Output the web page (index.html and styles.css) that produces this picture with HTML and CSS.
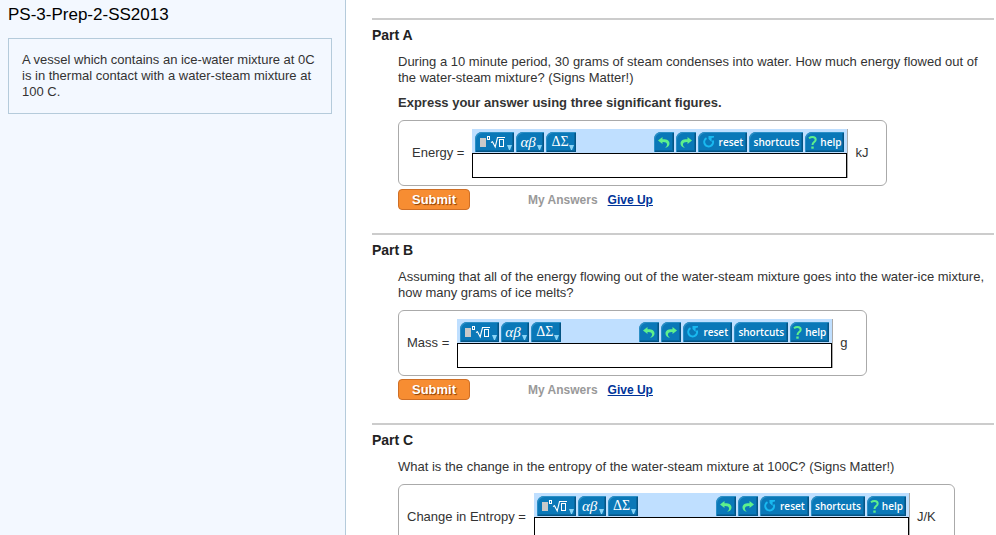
FILE: index.html
```html
<!DOCTYPE html>
<html lang="en">
<head>
<meta charset="utf-8">
<title>PS-3-Prep-2-SS2013</title>
<link rel="stylesheet" href="styles.css">
</head>
<body>
<svg class="sprite" aria-hidden="true">
  <symbol id="i-template" viewBox="0 0 39 20">
    <rect x="5" y="6" width="6" height="9" fill="#c9c9c9"/>
    <rect x="12.500" y="4.500" width="2" height="3" fill="none" stroke="#fff"/>
    <path d="M16 10.500l1.500-.8 2.700 5.300L22.500 5.500h7.500" fill="none" stroke="#fff" stroke-width="1.100"/>
    <rect x="24.500" y="7.500" width="4" height="7" fill="none" stroke="#fff"/>
  </symbol>
  <symbol id="i-caret" viewBox="0 0 5 5"><path d="M0 0h5L3 5H2z" fill="#8ad4f5"/></symbol>
  <symbol id="i-undo" viewBox="0 0 20 20">
    <path d="M4 8.500L8.500 5v2.200C13 7 15.500 8.500 15.500 11.500c0 2-1.500 3.700-4.500 4.500 1.500-1.500 2.200-2.500 2-3.800C12.800 10.500 11.500 9.800 8.500 9.900V12z" fill="#5ef08c"/>
  </symbol>
  <symbol id="i-redo" viewBox="0 0 20 20">
    <path d="M16 8.500L11.500 5v2.200C7 7 4.500 8.500 4.500 11.500c0 2 1.500 3.700 4.500 4.500-1.500-1.500-2.200-2.500-2-3.800C7.200 10.500 8.500 9.800 11.500 9.900V12z" fill="#5ef08c"/>
  </symbol>
  <symbol id="i-reset" viewBox="0 0 12 12">
    <path d="M3.500 2.200A4.400 4.400 0 1 0 9.800 4.500" fill="none" stroke="#19b9f0" stroke-width="2"/>
    <path d="M5.500 0H11v1.600L8.600 2v4L5.500 3z" fill="#19b9f0"/>
  </symbol>
  <symbol id="i-help" viewBox="0 0 9 13">
    <path d="M1 2.200C2 1.400 3 1 4.500 1 6.500 1 7.700 2 7.700 3.700c0 2.300-3.200 2.600-3.200 5.300" fill="none" stroke="#5ef08c" stroke-width="2"/>
    <rect x="3.300" y="10.500" width="2.400" height="2.200" fill="#5ef08c"/>
  </symbol>
</svg>

<div class="layout">
  <aside class="sidebar">
    <h1 class="title">PS-3-Prep-2-SS2013</h1>
    <p class="intro">A vessel which contains an ice-water mixture at 0C is in thermal contact with a water-steam mixture at 100 C.</p>
  </aside>

  <main class="content">
    <section class="part">
      <h2 class="part-title">Part A</h2>
      <div class="part-body">
        <p class="text">During a 10 minute period, 30 grams of steam condenses into water. How much energy flowed out of the water-steam mixture? (Signs Matter!)</p>
        <p class="text strong">Express your answer using three significant figures.</p>
        <div class="answer answer-padded">
          <label class="label" for="energy">Energy =</label>
          <div class="editor">
            <div class="toolbar">
              <button class="tool tool-template" aria-label="Templates"><svg class="template"><use href="#i-template"/></svg><svg class="caret"><use href="#i-caret"/></svg></button>
              <button class="tool tool-greek"><i>αβ</i><svg class="caret"><use href="#i-caret"/></svg></button>
              <button class="tool tool-sigma">ΔΣ<svg class="caret"><use href="#i-caret"/></svg></button>
              <button class="tool tool-arrow push" aria-label="Undo"><svg class="arrow"><use href="#i-undo"/></svg></button>
              <button class="tool tool-arrow" aria-label="Redo"><svg class="arrow"><use href="#i-redo"/></svg></button>
              <button class="tool tool-reset"><svg class="reset"><use href="#i-reset"/></svg>reset</button>
              <button class="tool tool-shortcuts">shortcuts</button>
              <button class="tool tool-help"><svg class="help"><use href="#i-help"/></svg>help</button>
            </div>
            <input class="field" id="energy" type="text">
          </div>
          <span class="unit">kJ</span>
        </div>
        <div class="actions">
          <button class="submit">Submit</button>
          <span class="my-answers">My Answers</span>
          <a class="give-up" href="#">Give Up</a>
        </div>
      </div>
    </section>

    <section class="part">
      <h2 class="part-title">Part B</h2>
      <div class="part-body">
        <p class="text">Assuming that all of the energy flowing out of the water-steam mixture goes into the water-ice mixture, how many grams of ice melts?</p>
        <div class="answer">
          <label class="label" for="mass">Mass =</label>
          <div class="editor">
            <div class="toolbar">
              <button class="tool tool-template" aria-label="Templates"><svg class="template"><use href="#i-template"/></svg><svg class="caret"><use href="#i-caret"/></svg></button>
              <button class="tool tool-greek"><i>αβ</i><svg class="caret"><use href="#i-caret"/></svg></button>
              <button class="tool tool-sigma">ΔΣ<svg class="caret"><use href="#i-caret"/></svg></button>
              <button class="tool tool-arrow push" aria-label="Undo"><svg class="arrow"><use href="#i-undo"/></svg></button>
              <button class="tool tool-arrow" aria-label="Redo"><svg class="arrow"><use href="#i-redo"/></svg></button>
              <button class="tool tool-reset"><svg class="reset"><use href="#i-reset"/></svg>reset</button>
              <button class="tool tool-shortcuts">shortcuts</button>
              <button class="tool tool-help"><svg class="help"><use href="#i-help"/></svg>help</button>
            </div>
            <input class="field" id="mass" type="text">
          </div>
          <span class="unit">g</span>
        </div>
        <div class="actions">
          <button class="submit">Submit</button>
          <span class="my-answers">My Answers</span>
          <a class="give-up" href="#">Give Up</a>
        </div>
      </div>
    </section>

    <section class="part">
      <h2 class="part-title">Part C</h2>
      <div class="part-body">
        <p class="text">What is the change in the entropy of the water-steam mixture at 100C? (Signs Matter!)</p>
        <div class="answer">
          <label class="label" for="entropy">Change in Entropy =</label>
          <div class="editor">
            <div class="toolbar">
              <button class="tool tool-template" aria-label="Templates"><svg class="template"><use href="#i-template"/></svg><svg class="caret"><use href="#i-caret"/></svg></button>
              <button class="tool tool-greek"><i>αβ</i><svg class="caret"><use href="#i-caret"/></svg></button>
              <button class="tool tool-sigma">ΔΣ<svg class="caret"><use href="#i-caret"/></svg></button>
              <button class="tool tool-arrow push" aria-label="Undo"><svg class="arrow"><use href="#i-undo"/></svg></button>
              <button class="tool tool-arrow" aria-label="Redo"><svg class="arrow"><use href="#i-redo"/></svg></button>
              <button class="tool tool-reset"><svg class="reset"><use href="#i-reset"/></svg>reset</button>
              <button class="tool tool-shortcuts">shortcuts</button>
              <button class="tool tool-help"><svg class="help"><use href="#i-help"/></svg>help</button>
            </div>
            <input class="field" id="entropy" type="text">
          </div>
          <span class="unit">J/K</span>
        </div>
      </div>
    </section>
  </main>
</div>
</body>
</html>
```
FILE: styles.css
```css
* {
  box-sizing: border-box;
}

body {
  margin: 0;
  background: #fff;
  color: #333;
  font: 13px/16px "Liberation Sans", Arial, sans-serif;
}

.sprite {
  display: none;
}

.layout {
  display: flex;
  height: 100vh;
}

.sidebar {
  flex: 0 0 346px;
  padding: 5px 13px 0 8px;
  border-right: 1px solid #b5cbdb;
  background: #f3f8ff;
}

.title {
  margin: 0 0 13px;
  color: #000;
  font-size: 17px;
  font-weight: normal;
  line-height: 20px;
}

.intro {
  margin: 0;
  padding: 13px;
  border: 1px solid #b5cbdb;
}

.content {
  flex: 1;
  min-width: 0;
  padding: 18px 2px 0 26px;
  overflow-y: auto;
  scrollbar-width: none;
}

.part {
  margin-bottom: 23px;
  padding-top: 7px;
  border-top: 2px solid #ccc;
}

.part-title {
  margin: 0 0 11px;
  color: #222;
  font-size: 14px;
  line-height: 16px;
}

.part-body {
  padding-left: 26px;
}

.text {
  margin: 0 0 9px;
}

.strong {
  font-weight: bold;
}

.answer {
  display: flex;
  align-items: center;
  width: fit-content;
  padding: 8px 18px 7px 8px;
  border: 1px solid #aaa;
  border-radius: 6px;
}

.answer-padded {
  padding-left: 13px;
}

.label,
.unit {
  padding-bottom: 2px;
}

.label {
  margin-right: 8px;
}

.unit {
  margin-left: 7px;
}

.editor {
  width: 376px;
  border-right: 1px solid #aaa;
}

.toolbar {
  display: flex;
  gap: 2px;
  height: 24px;
  padding: 3px 3px 0;
  background: #bfdfff;
}

.push {
  margin-left: auto;
}

.tool {
  display: flex;
  align-items: center;
  justify-content: center;
  position: relative;
  height: 20px;
  padding: 0;
  border: 0;
  border-radius: 7px 0 0 0;
  background: #0a78b8;
  box-shadow: inset 1px 1px 0 #2b8fc6, inset -1px -1px 0 #045484, inset -2px -2px 0 #07659d;
  color: #fff;
  font: 600 10px/16px "Open Sans", sans-serif;
}

.tool-template {
  width: 39px;
}

.tool-greek {
  justify-content: flex-start;
  width: 28px;
  padding-left: 4px;
  font: 15px/16px "Liberation Serif", serif;
}

.tool-sigma {
  justify-content: flex-start;
  width: 30px;
  padding-left: 5px;
  font: 14px/16px "Liberation Serif", serif;
}

.tool-arrow {
  width: 20px;
}

.tool-reset {
  gap: 4px;
  width: 49px;
}

.tool-shortcuts {
  width: 54px;
}

.tool-help {
  gap: 3px;
  width: 39px;
}

.template {
  width: 39px;
  height: 20px;
}

.caret {
  position: absolute;
  right: 2px;
  bottom: 2px;
  width: 5px;
  height: 5px;
}

.arrow {
  width: 20px;
  height: 20px;
}

.reset {
  width: 12px;
  height: 12px;
}

.help {
  width: 9px;
  height: 13px;
}

.field {
  display: block;
  width: 100%;
  height: 25px;
  padding: 2px 4px;
  border: 1px solid #000;
  border-radius: 0;
  background: #fff;
  font: inherit;
  outline: 0;
}

.actions {
  display: flex;
  align-items: center;
  margin-top: 3px;
  font-size: 12px;
  font-weight: bold;
}

.submit {
  width: 72px;
  height: 21px;
  margin-right: 58px;
  padding: 0;
  border: 1px solid #cf6f26;
  border-radius: 4px;
  background: #f78d32;
  color: #fff;
  font: bold 13px/16px "Liberation Sans", Arial, sans-serif;
  text-shadow: 1px 1px 1px #8a3d00;
}

.my-answers {
  margin-right: 10px;
  color: #999;
}

.give-up {
  color: #039;
}
```
